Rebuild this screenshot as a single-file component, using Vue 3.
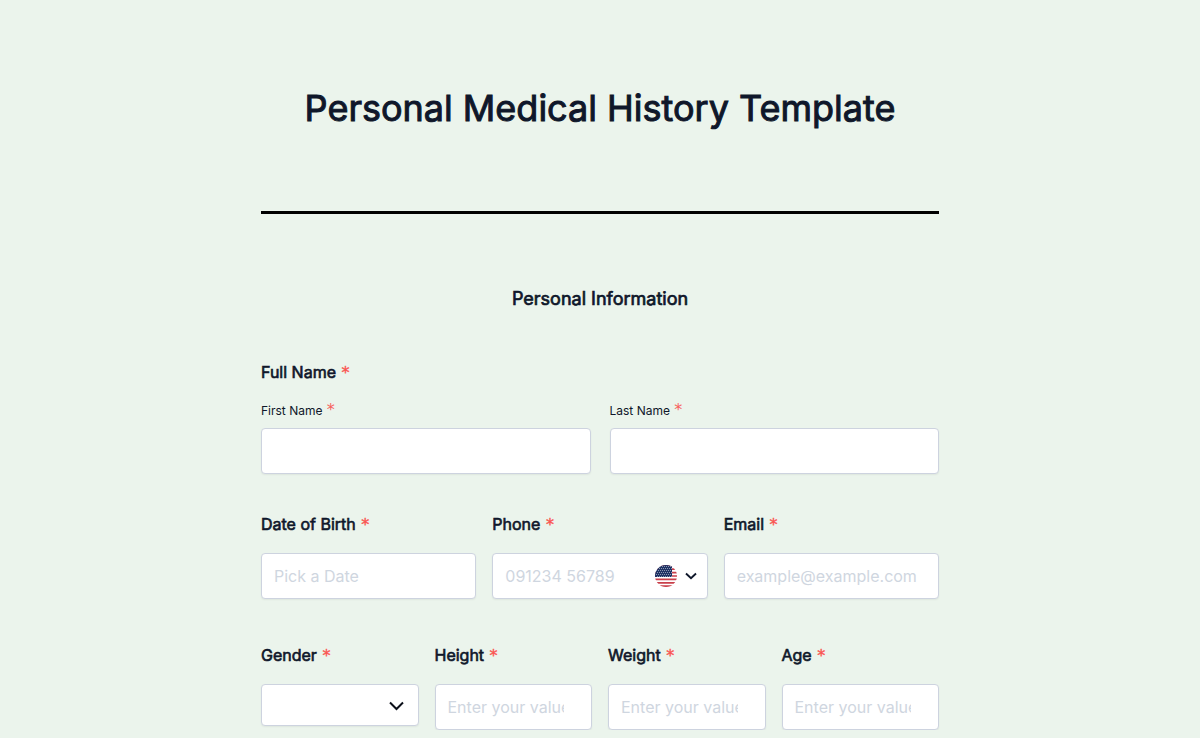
<script setup>
const basics = [
  { id: 'birth', label: 'Date of Birth', type: 'text', hint: 'Pick a Date' },
  { id: 'phone', label: 'Phone', type: 'tel', hint: '091234 56789' },
  { id: 'email', label: 'Email', type: 'email', hint: 'example@example.com' },
]
const measures = [
  { id: 'height', label: 'Height' },
  { id: 'weight', label: 'Weight' },
  { id: 'age', label: 'Age' },
]
const stars = []
for (let row = 0; row < 6; row++) {
  for (let col = 0; col < 8; col++) {
    stars.push({ x: 1.5 + col * 2 + (row % 2), y: 1.5 + row * 2 })
  }
}
</script>

<template>
  <main class="page">
    <form class="form" @submit.prevent>
      <header class="head">
        <h1 class="title">Personal Medical History Template</h1>
      </header>
      <hr class="rule" />
      <h2 class="section">Personal Information</h2>

      <fieldset class="names">
        <legend class="label">Full Name <span class="req">*</span></legend>
        <div class="grid two">
          <div class="field">
            <label class="sub" for="first">First Name <span class="req">*</span></label>
            <input id="first" class="box" type="text" />
          </div>
          <div class="field">
            <label class="sub" for="last">Last Name <span class="req">*</span></label>
            <input id="last" class="box" type="text" />
          </div>
        </div>
      </fieldset>

      <div class="grid three">
        <div v-for="f in basics" :key="f.id" class="field">
          <label class="label" :for="f.id">{{ f.label }} <span class="req">*</span></label>
          <div v-if="f.id === 'phone'" class="box phone">
            <input :id="f.id" class="bare" :type="f.type" :placeholder="f.hint" />
            <button type="button" class="country" aria-label="Country: United States">
              <svg class="flag" viewBox="0 0 22 22" aria-hidden="true">
                <clipPath id="disc"><circle cx="11" cy="11" r="11" /></clipPath>
                <g clip-path="url(#disc)">
                  <rect width="22" height="22" fill="#fff" />
                  <path
                    d="M0 .8h22M0 4.2h22M0 7.6h22M0 11h22M0 14.4h22M0 17.8h22M0 21.2h22"
                    stroke="#c9404b"
                    stroke-width="1.7"
                  />
                  <rect width="17" height="12" fill="#1f3365" />
                  <circle v-for="(s, i) in stars" :key="i" :cx="s.x" :cy="s.y" r=".42" fill="#fff" />
                </g>
              </svg>
              <svg class="caret" viewBox="0 0 12 8" aria-hidden="true">
                <path d="M1 1.500 6 6.200l5-4.700" fill="none" stroke="#0f172a" stroke-width="1.9" />
              </svg>
            </button>
          </div>
          <input v-else :id="f.id" class="box" :type="f.type" :placeholder="f.hint" />
        </div>
      </div>

      <div class="grid four">
        <div class="field">
          <label class="label" for="gender">Gender <span class="req">*</span></label>
          <div class="picker">
            <select id="gender" class="box select">
              <option value=""></option>
              <option>Female</option>
              <option>Male</option>
            </select>
            <svg class="arrow" viewBox="0 0 16 12" aria-hidden="true">
              <path d="M1 3.500 7.500 10l6.500-6.500" fill="none" stroke="#0b0f19" stroke-width="2" />
            </svg>
          </div>
        </div>
        <div v-for="m in measures" :key="m.id" class="field">
          <label class="label" :for="m.id">{{ m.label }} <span class="req">*</span></label>
          <input :id="m.id" class="box" type="number" placeholder="Enter your value" />
        </div>
      </div>
    </form>
  </main>
</template>

<style>
body {
  background: #ebf4ec;
}
</style>

<style scoped>
.page {
  padding: 0 16px;
  font-family: Inter, "Liberation Sans", sans-serif;
  font-size: 16px;
  line-height: 24px;
  color: #0f172a;
}
.form {
  max-width: 678px;
  margin: 0 auto;
  padding-top: 80px;
}
.title {
  margin: 0;
  font-size: 36px;
  line-height: 56px;
  font-weight: 400;
  -webkit-text-stroke: 1px currentColor;
  text-align: center;
}
.rule {
  height: 3px;
  margin: 75px 0 0;
  border: 0;
  background: #000;
}
.section {
  margin: 71px 0 0;
  font-size: 18px;
  line-height: 28px;
  font-weight: 400;
  -webkit-text-stroke: 0.04em currentColor;
  text-align: center;
}
.names {
  min-width: 0;
  margin: 47px 0 0;
  padding: 0;
  border: 0;
}
.grid {
  display: grid;
  align-items: start;
  gap: 16px;
}
.two {
  grid-template-columns: repeat(2, minmax(0, 1fr));
  gap: 19px;
  margin-top: 15px;
}
.three {
  grid-template-columns: repeat(3, minmax(0, 1fr));
  margin-top: 38px;
}
.four {
  grid-template-columns: repeat(4, minmax(0, 1fr));
  margin-top: 44px;
}
.field {
  display: flex;
  flex-direction: column;
  min-width: 0;
}
.label {
  padding: 0;
  -webkit-text-stroke: 0.04em currentColor;
}
.field .label {
  margin-bottom: 17px;
}
.sub {
  margin-bottom: 5px;
  font-size: 12px;
}
.req {
  margin-left: 1px;
  font-family: "DejaVu Sans", sans-serif;
  font-size: 16px;
  line-height: 1;
  color: #f8605c;
}
.label .req {
  color: #fa5552;
  -webkit-text-stroke: 0.025em currentColor;
}
.box {
  box-sizing: border-box;
  width: 100%;
  height: 46px;
  padding: 0 12px;
  border: 1px solid #cdd3df;
  border-radius: 4px;
  background: #fff;
  box-shadow: 0 1px 2px rgba(0, 0, 0, 0.06);
  font: inherit;
  color: inherit;
}
.box::placeholder,
.bare::placeholder {
  color: #cfd6e0;
  opacity: 1;
}
.phone {
  display: flex;
  align-items: center;
  padding-right: 10px;
}
.bare {
  flex: 1;
  min-width: 0;
  padding: 0;
  border: 0;
  background: none;
  font: inherit;
  color: inherit;
}
.country {
  display: flex;
  align-items: center;
  gap: 8px;
  padding: 0;
  border: 0;
  background: none;
}
.flag {
  width: 22px;
  height: 22px;
}
.caret {
  width: 12px;
  height: 8px;
}
.picker {
  display: grid;
  align-items: center;
}
.picker > * {
  grid-area: 1 / 1;
}
.select {
  height: 42px;
  appearance: none;
}
.arrow {
  justify-self: end;
  width: 16px;
  height: 12px;
  margin-right: 14px;
  pointer-events: none;
}
</style>
